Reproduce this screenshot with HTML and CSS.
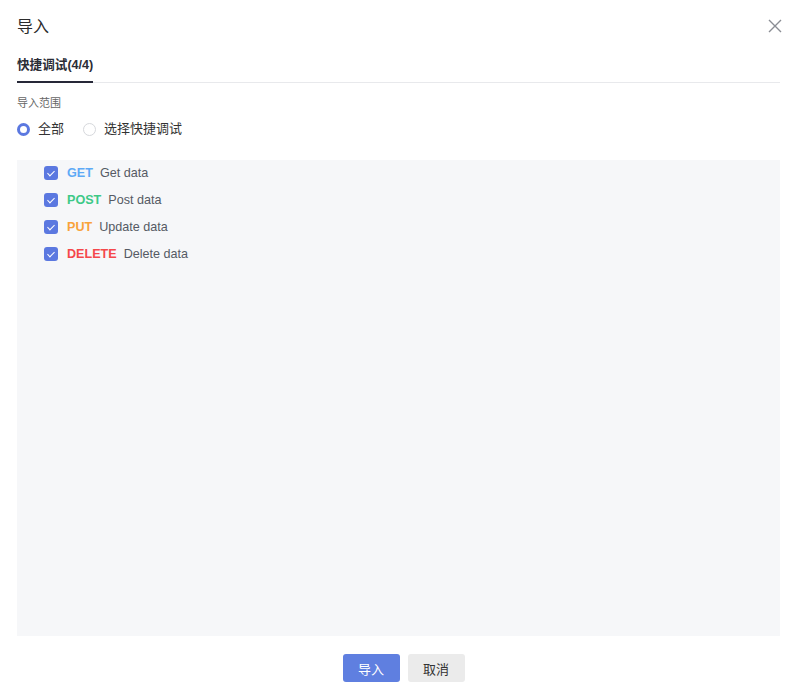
FILE: index.html
```html
<!DOCTYPE html>
<html lang="zh">
<head>
    <meta charset="UTF-8">
    <meta name="viewport" content="width=device-width, initial-scale=1.0">
    <title>导入</title>
    <link rel="stylesheet" href="styles.css">
</head>
<body>

    <div class="dialog">
        <div class="header">
            <span class="title">导入</span>
            <span class="close">
                <svg width="14" height="14" viewBox="0 0 14 14"><path d="M1 1L13 13M13 1L1 13" stroke="#8a8d94" stroke-width="1.4" fill="none"/></svg>
            </span>
        </div>

        <div class="tabs">
            <div class="tab active">快捷调试(4/4)</div>
        </div>

        <div class="label">导入范围</div>
        <div class="radio-group">
            <label class="radio checked"><span class="dot"></span>全部</label>
            <label class="radio"><span class="dot"></span>选择快捷调试</label>
        </div>

        <div class="panel">
            <div class="item"><span class="checkbox"></span><span class="method get">GET</span><span class="desc">Get data</span></div>
            <div class="item"><span class="checkbox"></span><span class="method post">POST</span><span class="desc">Post data</span></div>
            <div class="item"><span class="checkbox"></span><span class="method put">PUT</span><span class="desc">Update data</span></div>
            <div class="item"><span class="checkbox"></span><span class="method delete">DELETE</span><span class="desc">Delete data</span></div>
        </div>

        <div class="footer">
            <button class="btn primary">导入</button>
            <button class="btn">取消</button>
        </div>
    </div>

</body>
</html>
```

FILE: styles.css
```css
body {
    margin: 0;
    font-family: "Liberation Sans", Arial, "Noto Sans CJK SC", sans-serif;
    color: #333;
    background-color: #fff;
}
.dialog {
    width: 763px;
    padding: 0 18px 0 17px;
}
.header {
    display: flex;
    justify-content: space-between;
    align-items: center;
    height: 24px;
    padding-top: 13px;
}
.title {
    font-size: 16px;
    color: #2b2b2b;
}
.close {
    display: flex;
    margin-right: -2px;
    margin-top: 2px;
}
.tabs {
    margin-top: 17px;
    border-bottom: 1px solid #e8e9ec;
    display: flex;
}
.tab {
    font-size: 12.6px;
    font-weight: bold;
    color: #2b2d36;
    padding: 2px 0 7px 0;
    line-height: 18px;
}
.tab.active {
    border-bottom: 2px solid #262838;
    margin-bottom: -1px;
}
.label {
    font-size: 11px;
    color: #666;
    margin-top: 12px;
    line-height: 16px;
}
.radio-group {
    display: flex;
    gap: 19px;
    margin-top: 9px;
    font-size: 13px;
    color: #333;
}
.radio {
    display: flex;
    align-items: center;
    gap: 8px;
    line-height: 18px;
}
.radio .dot {
    width: 11px;
    height: 11px;
    border-radius: 50%;
    border: 1px solid #d6d8dc;
    background: #fff;
}
.radio.checked .dot {
    width: 7px;
    height: 7px;
    border: 3px solid #5b78e0;
}
.panel {
    margin-top: 22px;
    height: 475px;
    background-color: #f6f7f9;
    padding: 1px 0 0 27px;
    display: flex;
    flex-direction: column;
    gap: 3px;
}
.item {
    display: flex;
    align-items: center;
    height: 24px;
    font-size: 12.6px;
}
.checkbox {
    width: 14px;
    height: 14px;
    border-radius: 3px;
    background-color: #5b78e0;
    margin-right: 9px;
    position: relative;
}
.checkbox::after {
    content: "";
    position: absolute;
    left: 4.5px;
    top: 2.5px;
    width: 3px;
    height: 6px;
    border-right: 1.3px solid #fff;
    border-bottom: 1.3px solid #fff;
    transform: rotate(45deg);
}
.method {
    font-weight: bold;
    margin-right: 7px;
}
.method.get { color: #5eaaf6; }
.method.post { color: #3dc987; }
.method.put { color: #f9a23a; }
.method.delete { color: #f5484b; }
.desc {
    color: #555a64;
}
.footer {
    display: flex;
    justify-content: center;
    gap: 8px;
    margin-top: 18px;
    padding-left: 10px;
}
.btn {
    width: 57px;
    height: 28px;
    border: none;
    border-radius: 3px;
    font-size: 13px;
    font-family: inherit;
    background-color: #ebebeb;
    color: #333;
    cursor: pointer;
}
.btn.primary {
    background-color: #5f7fe0;
    color: #fff;
}
```
